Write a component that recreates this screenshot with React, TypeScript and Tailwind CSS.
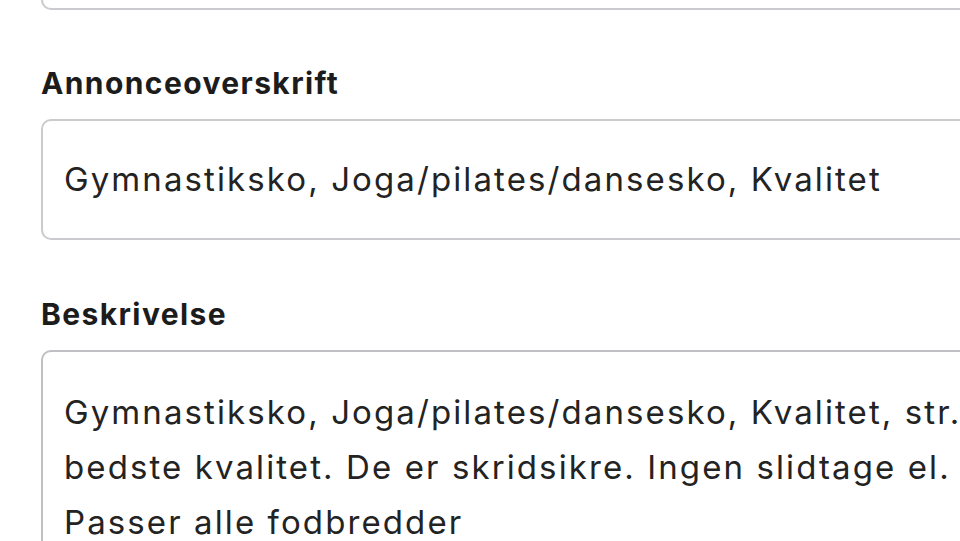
import React from 'react';

const fieldText = 'text-[33px] leading-[55px] tracking-[2.1px] text-[#232323]';
const labelText = 'block text-[30px] font-bold leading-[34px] tracking-[1.4px] text-[#1c1c1c]';

export default function App() {
  return (
    <div className="h-[541px] w-[960px] overflow-hidden bg-white font-['Inter',sans-serif]">
      <div className="ml-[41px] w-[1000px]">
        <div className="h-[10px] rounded-b-[10px] border-2 border-t-0 border-[#cbcbcf]" />

        <label className={`mt-[56px] ${labelText}`}>Annonceoverskrift</label>
        <div className="mt-[19px] flex h-[121px] items-center rounded-[10px] border-2 border-[#cbcbcf] px-[21px]">
          <span className={fieldText}>Gymnastiksko, Joga/pilates/dansesko, Kvalitet</span>
        </div>

        <label className={`mt-[57px] ${labelText}`}>Beskrivelse</label>
        <div className="mt-[19px] h-[300px] rounded-t-[10px] border-2 border-[#c0c0c4] px-[21px] pt-[33px]">
          <p className={`${fieldText} whitespace-nowrap`}>
            Gymnastiksko, Joga/pilates/dansesko, Kvalitet, str.
            <br />
            bedste kvalitet. De er skridsikre. Ingen slidtage el.
            <br />
            Passer alle fodbredder
          </p>
        </div>
      </div>
    </div>
  );
}
